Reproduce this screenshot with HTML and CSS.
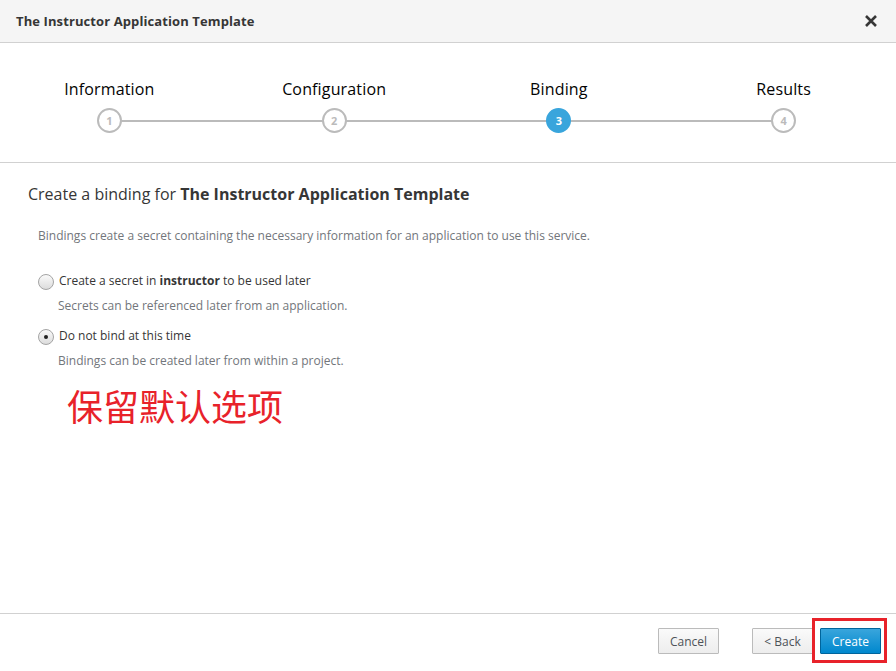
FILE: index.html
```html
<!DOCTYPE html>
<html>
<head>
<meta charset="utf-8">
<link rel="stylesheet" href="styles.css">
</head>
<body>
<div class="modal">
  <div class="header">
    <div class="title">The Instructor Application Template</div>
    <div class="close">
      <svg width="14" height="14" viewBox="0 0 14 14"><path d="M2 2 L12 12 M12 2 L2 12" stroke="#363636" stroke-width="2.6" stroke-linecap="butt"/></svg>
    </div>
  </div>
  <div class="steps">
    <div class="track"></div>
    <div class="step"><div class="label">Information</div><div class="circle">1</div></div>
    <div class="step"><div class="label">Configuration</div><div class="circle">2</div></div>
    <div class="step"><div class="label">Binding</div><div class="circle active">3</div></div>
    <div class="step"><div class="label">Results</div><div class="circle">4</div></div>
  </div>
  <div class="content">
    <h2 class="heading">Create a binding for <b>The Instructor Application Template</b></h2>
    <div class="section">
      <p class="desc">Bindings create a secret containing the necessary information for an application to use this service.</p>
      <div class="option">
        <div class="radio-row"><span class="radio"></span><span class="opt-label">Create a secret in <b>instructor</b> to be used later</span></div>
        <div class="help">Secrets can be referenced later from an application.</div>
      </div>
      <div class="option">
        <div class="radio-row"><span class="radio checked"></span><span class="opt-label">Do not bind at this time</span></div>
        <div class="help">Bindings can be created later from within a project.</div>
      </div>
      <div class="note">保留默认选项</div>
    </div>
  </div>
  <div class="footer">
    <button class="btn">Cancel</button>
    <button class="btn back">&lt; Back</button>
    <span class="highlight"><button class="btn primary">Create</button></span>
  </div>
</div>
</body>
</html>
```
FILE: styles.css
```css
html, body { margin: 0; padding: 0; background: #fff; }
body { font-family: "Open Sans", "Noto Sans", sans-serif; color: #363636; }
.modal { width: 896px; height: 671px; display: flex; flex-direction: column; overflow: hidden; }
.header { height: 42px; background: #f5f5f5; border-bottom: 1px solid #d1d1d1; display: flex; align-items: center; justify-content: space-between; padding: 0 18px 0 16px; box-sizing: content-box; }
.title { font-weight: 700; font-size: 13px; color: #363636; letter-spacing: 0.1px; }
.close { width: 14px; height: 14px; display: flex; }
.steps { position: relative; height: 119px; border-bottom: 1px solid #d1d1d1; display: grid; grid-template-columns: repeat(4, 1fr); margin: 0 0 0 -3px; }
.track { position: absolute; left: 12.5%; right: 12.5%; top: 77px; height: 2px; background: #bbb; }
.step { display: flex; flex-direction: column; align-items: center; padding-top: 35px; position: relative; }
.label { font-size: 16px; color: #030303; line-height: 22px; height: 22px; letter-spacing: 0.15px; }
.circle { margin-top: 8px; width: 21px; height: 21px; border: 2px solid #bbb; border-radius: 50%; background: #fff; color: #bbb; font-size: 11px; font-weight: 700; display: flex; align-items: center; justify-content: center; line-height: 1; }
.circle.active { background: #39a5dc; border-color: #39a5dc; color: #fff; }
.content { flex: 1; padding: 20px 28px 0; }
.heading { margin: 0; font-size: 16px; font-weight: 400; color: #363636; line-height: 22px; }
.heading b { font-weight: 700; }
.section { padding-left: 10px; padding-top: 22px; }
.desc { margin: 0; font-size: 12px; color: #72767b; line-height: 17px; }
.option { margin-top: 28px; }
.option + .option { margin-top: 13px; }
.radio-row { display: flex; align-items: center; height: 17px; }
.radio { width: 14px; height: 14px; border: 1px solid #a4a4a4; border-radius: 50%; background: linear-gradient(#fafafa, #dcdcdc); margin-right: 5px; margin-top: 3px; position: relative; flex: none; }
.radio.checked::after { content: ""; position: absolute; left: 5px; top: 5px; width: 4px; height: 4px; background: #222; border-radius: 50%; }
.opt-label { font-size: 12px; color: #363636; }
.opt-label b { font-weight: 700; }
.help { margin-top: 8px; padding-left: 20px; font-size: 12px; color: #72767b; line-height: 17px; }
.note { margin-top: 12px; margin-left: 29px; font-family: "Noto Sans CJK SC", sans-serif; font-size: 36px; color: #e8222a; line-height: 48px; }
.footer { height: 58px; border-top: 1px solid #d1d1d1; display: flex; align-items: flex-start; justify-content: flex-end; padding: 14px 9px 0 0; box-sizing: border-box; }
.btn { font-family: "Open Sans", sans-serif; font-size: 12px; height: 26px; width: 61px; padding: 0; border: 1px solid #bbb; background: linear-gradient(#fafafa, #ededed); color: #4d5258; border-radius: 1px; }
.btn.back { margin-left: 33px; }
.highlight { margin: -10px 0 0 -1px; border: 3px solid #e8222a; padding: 7px 3px 6px 5px; display: flex; }
.btn.primary { background: linear-gradient(#39a5dc, #0088ce); border-color: #00659c; color: #fff; }
```
